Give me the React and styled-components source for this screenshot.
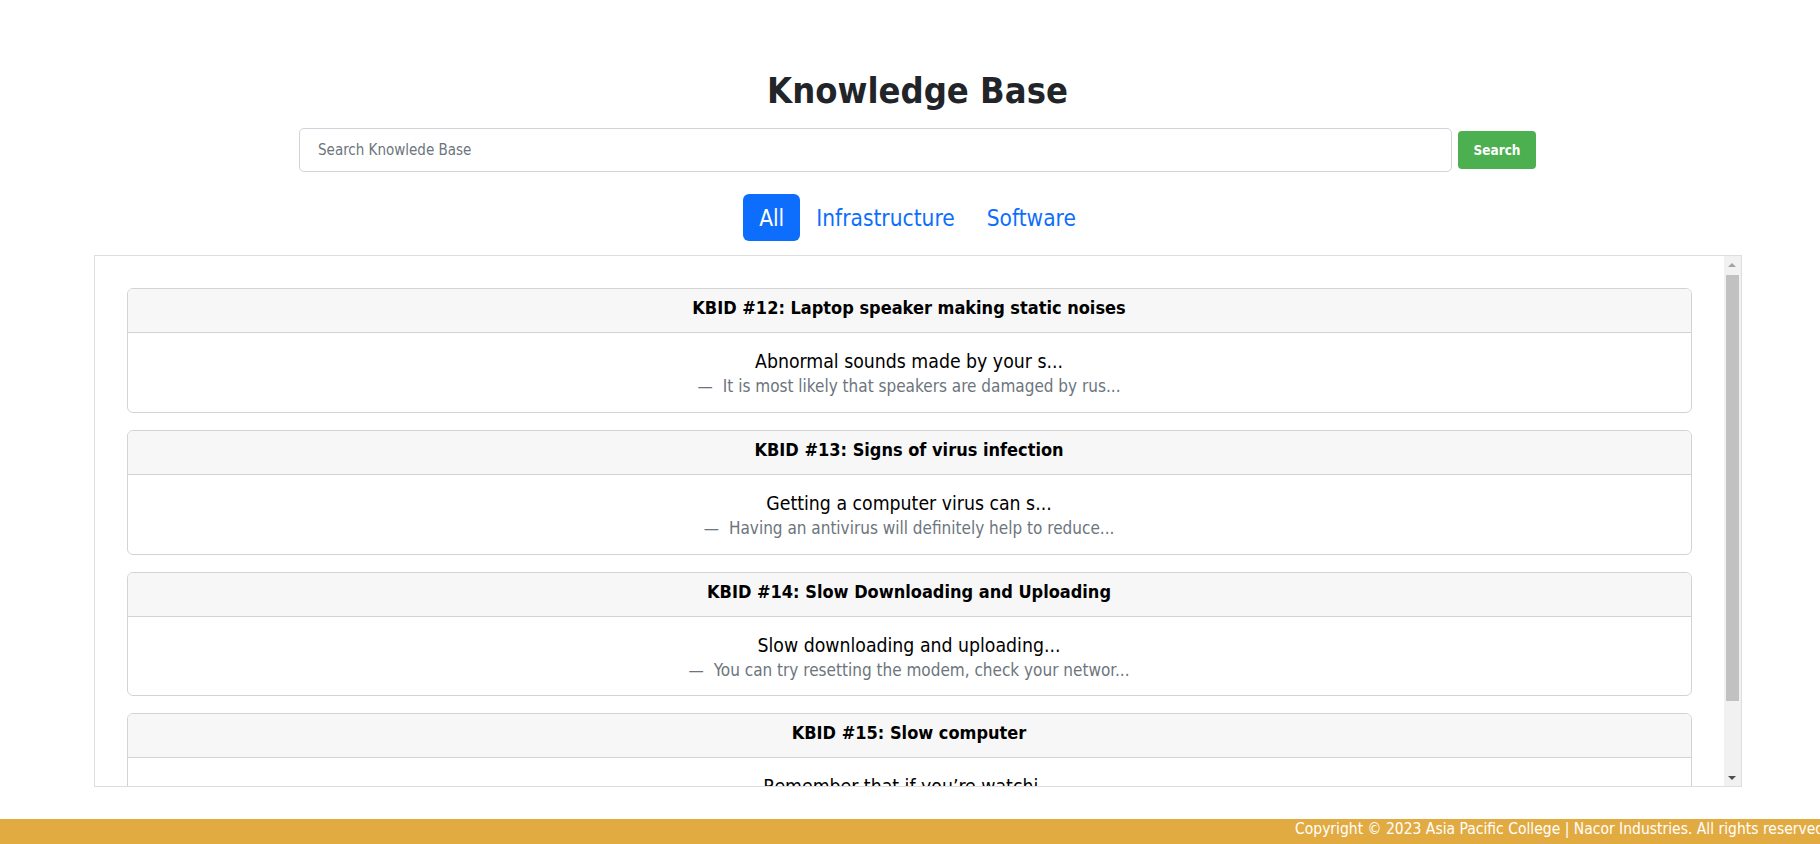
import React, {useState} from 'react';
import styled, {createGlobalStyle, css} from 'styled-components';

const font = `"DejaVu Sans Condensed", "DejaVu Sans", sans-serif`;

const GlobalStyle = createGlobalStyle`
html, body {
  margin: 0;
  padding: 0;
  background: #fff;
}
body {
  font-family: ${font};
  font-stretch: condensed;
  color: #212529;
}
* {
  box-sizing: border-box;
}
`;

const Page = styled.div`
height: 844px;
display: flex;
flex-direction: column;
overflow: hidden;
`;

const Main = styled.main`
flex: 1;
padding: 69px 0 0 15px;
display: flex;
flex-direction: column;
align-items: center;
`;

const Title = styled.h1`
margin: 0 0 16px;
font-size: 36px;
line-height: 43px;
font-weight: 700;
color: #212529;
`;

const SearchForm = styled.form`
width: 1237px;
display: flex;
align-items: center;
gap: 6px;
`;

const SearchInput = styled.input`
flex: 1;
height: 44px;
padding: 0 18px;
border: 1px solid #ced4da;
border-radius: 5px;
font: 15px ${font};
font-stretch: condensed;
color: #212529;
outline: none;
&::placeholder {
  color: #6c757d;
}
`;

const SearchButton = styled.button`
width: 78px;
height: 38px;
border: 0;
border-radius: 4px;
background: #4caf50;
color: #fff;
font: 700 13.5px ${font};
font-stretch: condensed;
cursor: pointer;
`;

const Tabs = styled.nav`
margin-top: 22px;
display: flex;
`;

const Tab = styled.button`
height: 47px;
padding: 0 16px;
border: 0;
border-radius: 6px;
background: transparent;
color: #0d6efd;
font: 22.5px ${font};
font-stretch: condensed;
cursor: pointer;
${({active}) => active && css`
  background: #0d6efd;
  color: #fff;
`}
`;

const Panel = styled.section`
margin-top: 14px;
width: 1648px;
height: 532px;
border: 1px solid #dedede;
display: flex;
`;

const Scroller = styled.div`
flex: 1;
overflow-y: auto;
padding: 32px 32px 28px;
scrollbar-width: none;
&::-webkit-scrollbar {
  display: none;
}
`;

const ScrollBar = styled.div`
width: 17px;
flex: none;
display: flex;
flex-direction: column;
background: #f1f1f1;
`;

const ScrollArrow = styled.div`
height: 17px;
flex: none;
display: flex;
align-items: center;
justify-content: center;
color: ${({dim}) => dim ? '#a3a3a3' : '#505050'};
`;

const ScrollTrack = styled.div`
flex: 1;
padding: 2px 2px 0;
`;

const ScrollThumb = styled.div`
height: 426px;
background: #c1c1c1;
`;

const Arrow = ({down, dim}) =>
    <ScrollArrow dim={dim}>
        <svg width="8" height="4" viewBox="0 0 8 4">
            <path d={down ? 'M0 0H8L4 4Z' : 'M0 4H8L4 0Z'} fill="currentColor"/>
        </svg>
    </ScrollArrow>;

const Card = styled.article`
border: 1px solid #d3d3d3;
border-radius: 6px;
overflow: hidden;
text-align: center;
& + & {
  margin-top: 17px;
}
`;

const CardHeader = styled.header`
padding: 9px 16px 8px;
background: #f7f7f7;
border-bottom: 1px solid #d3d3d3;
`;

const CardTitle = styled.h5`
margin: 0 0 7px;
font-size: 18px;
line-height: 19px;
font-weight: 700;
color: #000;
`;

const CardBody = styled.div`
padding: 17px 16px 15px;
`;

const Summary = styled.p`
margin: 0;
font-size: 19.3px;
line-height: 23.4px;
color: #000;
`;

const Answer = styled.p`
margin: 3px 0 0;
font-size: 17px;
line-height: 20.4px;
color: #6c757d;
&::before {
  content: "\\2014";
  margin-right: 10px;
}
`;

const Footer = styled.footer`
height: 25px;
background: #e2ab41;
color: #fff;
font-size: 15.5px;
line-height: 21px;
white-space: nowrap;
overflow: hidden;
padding-left: 1295px;
`;

const articles = [
    {id: 12, title: 'Laptop speaker making static noises', summary: 'Abnormal sounds made by your s...', answer: 'It is most likely that speakers are damaged by rus...', tag: 'Infrastructure'},
    {id: 13, title: 'Signs of virus infection', summary: 'Getting a computer virus can s...', answer: 'Having an antivirus will definitely help to reduce...', tag: 'Software'},
    {id: 14, title: 'Slow Downloading and Uploading', summary: 'Slow downloading and uploading...', answer: 'You can try resetting the modem, check your networ...', tag: 'Infrastructure'},
    {id: 15, title: 'Slow computer', summary: 'Remember that if you\u2019re watchi...', answer: 'Close the programs that you are not using at the m...', tag: 'Software'},
];

const tabs = ['All', 'Infrastructure', 'Software'];

export default () => {
    const [tab, setTab] = useState('All');
    const shown = articles.filter(a => tab === 'All' || a.tag === tab);

    return <Page>
        <GlobalStyle/>
        <Main>
            <Title>Knowledge Base</Title>
            <SearchForm onSubmit={e => e.preventDefault()}>
                <SearchInput placeholder="Search Knowlede Base"/>
                <SearchButton type="submit">Search</SearchButton>
            </SearchForm>
            <Tabs>
                {tabs.map(t =>
                    <Tab key={t} active={t === tab} onClick={() => setTab(t)}>{t}</Tab>)}
            </Tabs>
            <Panel>
                <Scroller>
                    {shown.map(a =>
                        <Card key={a.id}>
                            <CardHeader>
                                <CardTitle>KBID #{a.id}: {a.title}</CardTitle>
                            </CardHeader>
                            <CardBody>
                                <Summary>{a.summary}</Summary>
                                <Answer>{a.answer}</Answer>
                            </CardBody>
                        </Card>)}
                </Scroller>
                <ScrollBar>
                    <Arrow dim/>
                    <ScrollTrack>
                        <ScrollThumb/>
                    </ScrollTrack>
                    <Arrow down/>
                </ScrollBar>
            </Panel>
        </Main>
        <Footer>Copyright © 2023 Asia Pacific College | Nacor Industries. All rights reserved</Footer>
    </Page>;
}
